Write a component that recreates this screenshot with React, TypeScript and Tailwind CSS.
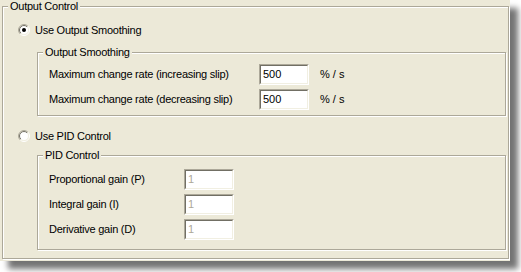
import React from 'react';

const font = { fontFamily: '"Liberation Sans", Arial, sans-serif' };

const Radio: React.FC<{ checked?: boolean }> = ({ checked }) => (
  <svg width="12" height="12" viewBox="0 0 12 12" className="shrink-0">
    <defs>
      <linearGradient id="rOuter" x1="0" y1="0" x2="1" y2="1">
        <stop offset="0.45" stopColor="#aca899" />
        <stop offset="0.55" stopColor="#ffffff" />
      </linearGradient>
      <linearGradient id="rInner" x1="0" y1="0" x2="1" y2="1">
        <stop offset="0.45" stopColor="#716f64" />
        <stop offset="0.55" stopColor="#f1efe2" />
      </linearGradient>
    </defs>
    <circle cx="6" cy="6" r="5.5" fill="none" stroke="url(#rOuter)" strokeWidth="1" />
    <circle cx="6" cy="6" r="4.5" fill="#ffffff" stroke="url(#rInner)" strokeWidth="1" />
    {checked && <circle cx="6" cy="6" r="2" fill="#000000" />}
  </svg>
);

const GroupBox: React.FC<{ title: string; className: string; children?: React.ReactNode }> = ({ title, className, children }) => (
  <div className={`relative border border-[#aca899] shadow-[1px_1px_0_#ffffff,inset_1px_1px_0_#ffffff] ${className}`}>
    <span className="absolute -top-[7px] left-[5px] px-[2px] bg-[#ece9d8] text-[11px] leading-[13px] tracking-[-0.25px] text-black">
      {title}
    </span>
    {children}
  </div>
);

const Field: React.FC<{ value: string; disabled?: boolean }> = ({ value, disabled }) => (
  <div className="w-[50px] h-[21px] border border-t-[#aca899] border-l-[#aca899] border-b-white border-r-white">
    <div className="h-full border border-t-[#716f64] border-l-[#716f64] border-b-[#f1efe2] border-r-[#f1efe2] bg-white pl-[2px] flex items-center">
      <span className={`text-[11px] leading-[13px] ${disabled ? 'text-[#aca899]' : 'text-black'}`}>{value}</span>
    </div>
  </div>
);

const Row: React.FC<{ label: string; labelWidth: string; value: string; unit?: string; disabled?: boolean }> = ({
  label,
  labelWidth,
  value,
  unit,
  disabled,
}) => (
  <div className="flex items-center h-[21px]">
    <span className={`${labelWidth} text-[11px] leading-[13px] tracking-[-0.25px] text-black`}>{label}</span>
    <Field value={value} disabled={disabled} />
    {unit && <span className="ml-[11px] text-[11px] leading-[13px] text-black">{unit}</span>}
  </div>
);

const App: React.FC = () => {
  return (
    <div className="w-[521px] h-[272px] bg-white" style={font}>
      <div className="w-[510px] h-[261px] bg-[#ece9d8] pl-[2px] pt-[6px] shadow-[8px_8px_6px_rgba(0,0,0,0.55)]">
        <GroupBox title="Output Control" className="w-[507px] h-[253px]">
          <div className="ml-[15px] mt-[17px] flex items-center gap-[5px] h-[12px]">
            <Radio checked />
            <span className="text-[11px] leading-[13px] tracking-[-0.25px] text-black">Use Output Smoothing</span>
          </div>

          <GroupBox title="Output Smoothing" className="ml-[34px] mt-[16px] w-[469px] h-[64px]">
            <div className="pl-[11px] pt-[11px] flex flex-col gap-[4px]">
              <Row label="Maximum change rate (increasing slip)" labelWidth="w-[210px]" value="500" unit="% / s" />
              <Row label="Maximum change rate (decreasing slip)" labelWidth="w-[210px]" value="500" unit="% / s" />
            </div>
          </GroupBox>

          <div className="ml-[15px] mt-[14px] flex items-center gap-[5px] h-[12px]">
            <Radio />
            <span className="text-[11px] leading-[13px] tracking-[-0.25px] text-black">Use PID Control</span>
          </div>

          <GroupBox title="PID Control" className="ml-[34px] mt-[13px] w-[469px] h-[95px]">
            <div className="pl-[11px] pt-[13px] flex flex-col gap-[4px]">
              <Row label="Proportional gain (P)" labelWidth="w-[135px]" value="1" disabled />
              <Row label="Integral gain (I)" labelWidth="w-[135px]" value="1" disabled />
              <Row label="Derivative gain (D)" labelWidth="w-[135px]" value="1" disabled />
            </div>
          </GroupBox>
        </GroupBox>
      </div>
    </div>
  );
};

export default App;
